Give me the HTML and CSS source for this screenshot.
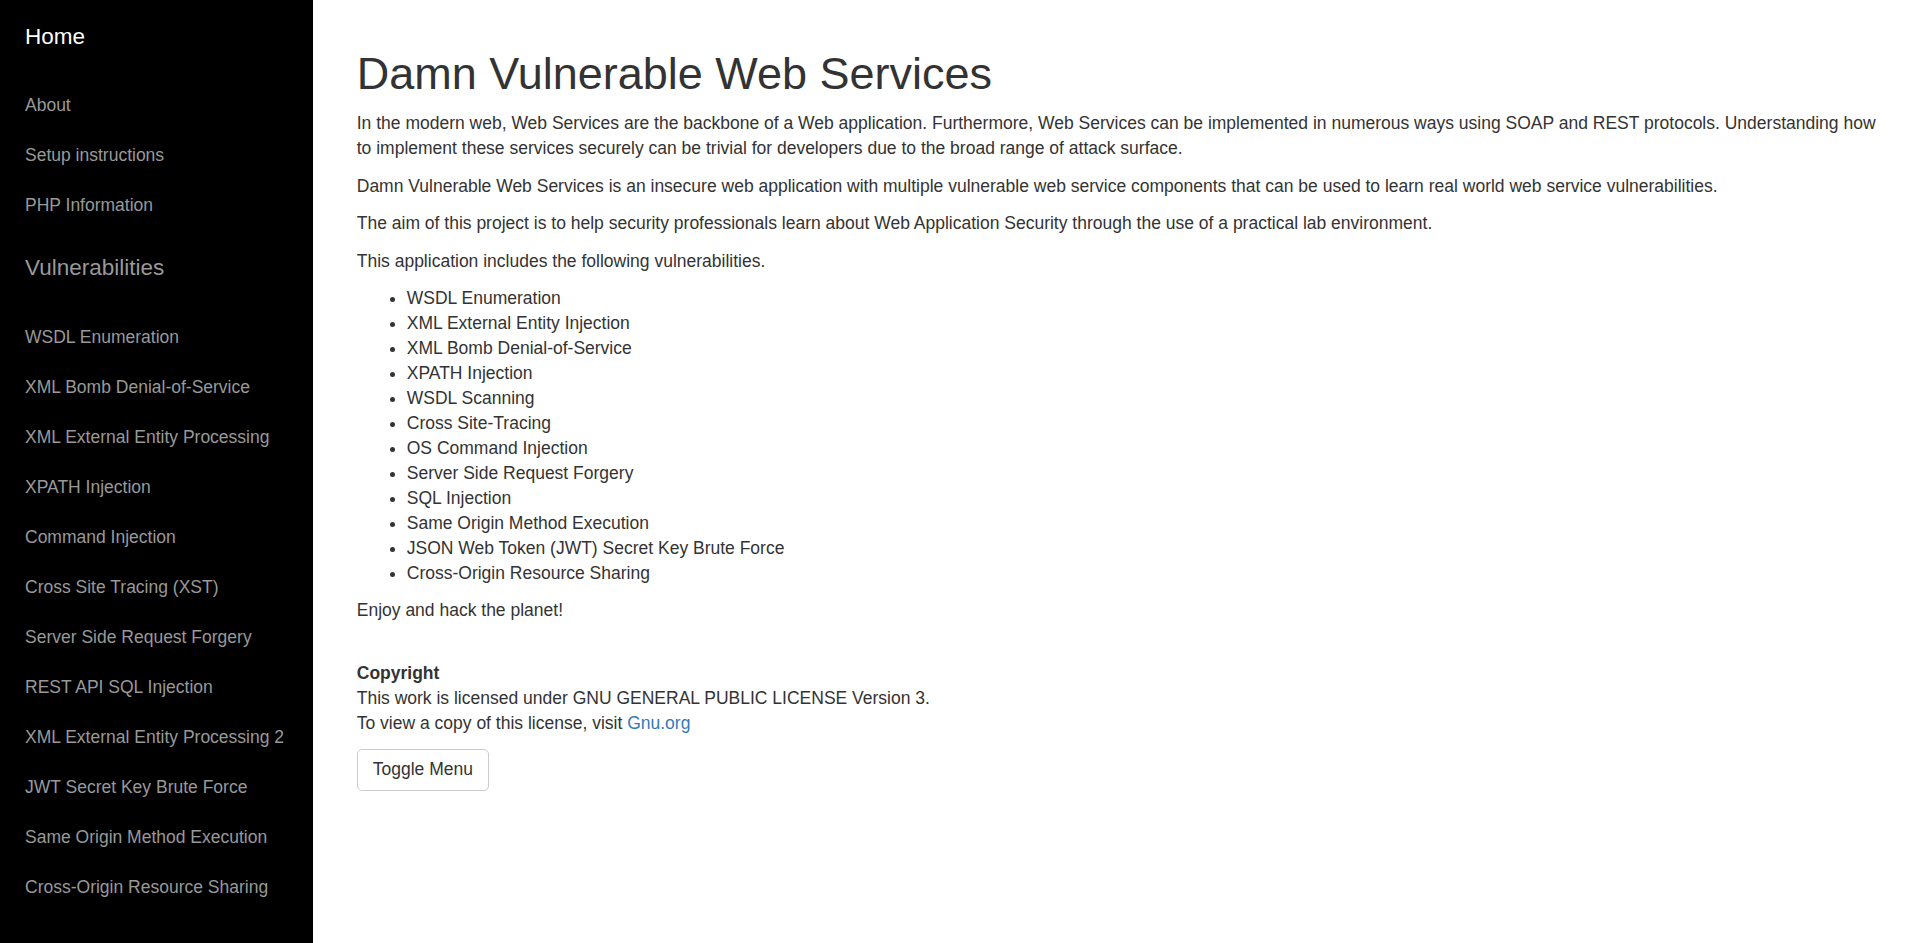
FILE: index.html
```html
<!DOCTYPE html>
<html lang="en">
<head>
<meta charset="utf-8">
<title>Damn Vulnerable Web Services</title>
<link rel="stylesheet" href="styles.css">
</head>
<body>
<div class="wrapper">
  <nav class="sidebar">
    <ul class="sidebar-nav">
      <li class="sidebar-brand"><a class="brand-home" href="#">Home</a></li>
      <li><a href="#">About</a></li>
      <li><a href="#">Setup instructions</a></li>
      <li><a href="#">PHP Information</a></li>
      <li class="sidebar-brand"><a href="#">Vulnerabilities</a></li>
      <li><a href="#">WSDL Enumeration</a></li>
      <li><a href="#">XML Bomb Denial-of-Service</a></li>
      <li><a href="#">XML External Entity Processing</a></li>
      <li><a href="#">XPATH Injection</a></li>
      <li><a href="#">Command Injection</a></li>
      <li><a href="#">Cross Site Tracing (XST)</a></li>
      <li><a href="#">Server Side Request Forgery</a></li>
      <li><a href="#">REST API SQL Injection</a></li>
      <li><a href="#">XML External Entity Processing 2</a></li>
      <li><a href="#">JWT Secret Key Brute Force</a></li>
      <li><a href="#">Same Origin Method Execution</a></li>
      <li><a href="#">Cross-Origin Resource Sharing</a></li>
    </ul>
  </nav>
  <main class="page-content">
    <div class="container">
      <h1 class="title">Damn Vulnerable Web Services</h1>
      <p>In the modern web, Web Services are the backbone of a Web application. Furthermore, Web Services can be implemented in numerous ways using SOAP and REST protocols. Understanding how to implement these services securely can be trivial for developers due to the broad range of attack surface.</p>
      <p>Damn Vulnerable Web Services is an insecure web application with multiple vulnerable web service components that can be used to learn real world web service vulnerabilities.</p>
      <p>The aim of this project is to help security professionals learn about Web Application Security through the use of a practical lab environment.</p>
      <p>This application includes the following vulnerabilities.</p>
      <ul class="vuln-list">
        <li>WSDL Enumeration</li>
        <li>XML External Entity Injection</li>
        <li>XML Bomb Denial-of-Service</li>
        <li>XPATH Injection</li>
        <li>WSDL Scanning</li>
        <li>Cross Site-Tracing</li>
        <li>OS Command Injection</li>
        <li>Server Side Request Forgery</li>
        <li>SQL Injection</li>
        <li>Same Origin Method Execution</li>
        <li>JSON Web Token (JWT) Secret Key Brute Force</li>
        <li>Cross-Origin Resource Sharing</li>
      </ul>
      <p class="closing">Enjoy and hack the planet!</p>
      <br>
      <p><strong>Copyright</strong><br>This work is licensed under GNU GENERAL PUBLIC LICENSE Version 3.<br>To view a copy of this license, visit <a class="link" href="#">Gnu.org</a></p>
      <button class="btn" type="button">Toggle Menu</button>
    </div>
  </main>
</div>
</body>
</html>
```

FILE: styles.css
```css
html, body {
  margin: 0;
  padding: 0;
  height: 100%;
}

body {
  font-family: "Liberation Sans", Arial, Helvetica, sans-serif;
  font-size: 17.5px;
  line-height: 25px;
  color: #333333;
  background: #ffffff;
}

.wrapper {
  display: flex;
  min-height: 100%;
}

.sidebar {
  flex: 0 0 313px;
  width: 313px;
  background: #000000;
  min-height: 943px;
}

.sidebar-nav {
  list-style: none;
  margin: -1px 0 0;
  padding: 0;
}

.sidebar-nav li {
  line-height: 50px;
  padding-left: 25px;
}

.sidebar-nav li a {
  display: block;
  color: #999999;
  text-decoration: none;
}

.sidebar-nav .sidebar-brand {
  height: 81.25px;
  font-size: 22.5px;
  line-height: 75px;
}

.sidebar-nav .sidebar-brand .brand-home {
  color: #ffffff;
}

.page-content {
  flex: 1 1 auto;
  padding: 24px 25px 25px;
  min-width: 0;
}

.container {
  padding: 0 18.75px;
}

.title {
  font-size: 45px;
  font-weight: 500;
  line-height: 1.1;
  margin: 25px 0 12.5px;
  color: #333333;
}

p {
  margin: 0 0 12.5px;
}

.vuln-list {
  margin: 0 0 11.5px;
  padding-left: 50px;
}

.closing {
  margin-bottom: 13.5px;
}

strong {
  font-weight: bold;
}

.link {
  color: #337ab7;
  text-decoration: none;
}

.btn {
  font-family: "Liberation Sans", Arial, Helvetica, sans-serif;
  font-size: 17.5px;
  line-height: 25px;
  color: #333333;
  background: #ffffff;
  border: 1px solid #cccccc;
  border-radius: 5px;
  padding: 7.5px 15px;
  margin: 0;
  cursor: pointer;
}
```
